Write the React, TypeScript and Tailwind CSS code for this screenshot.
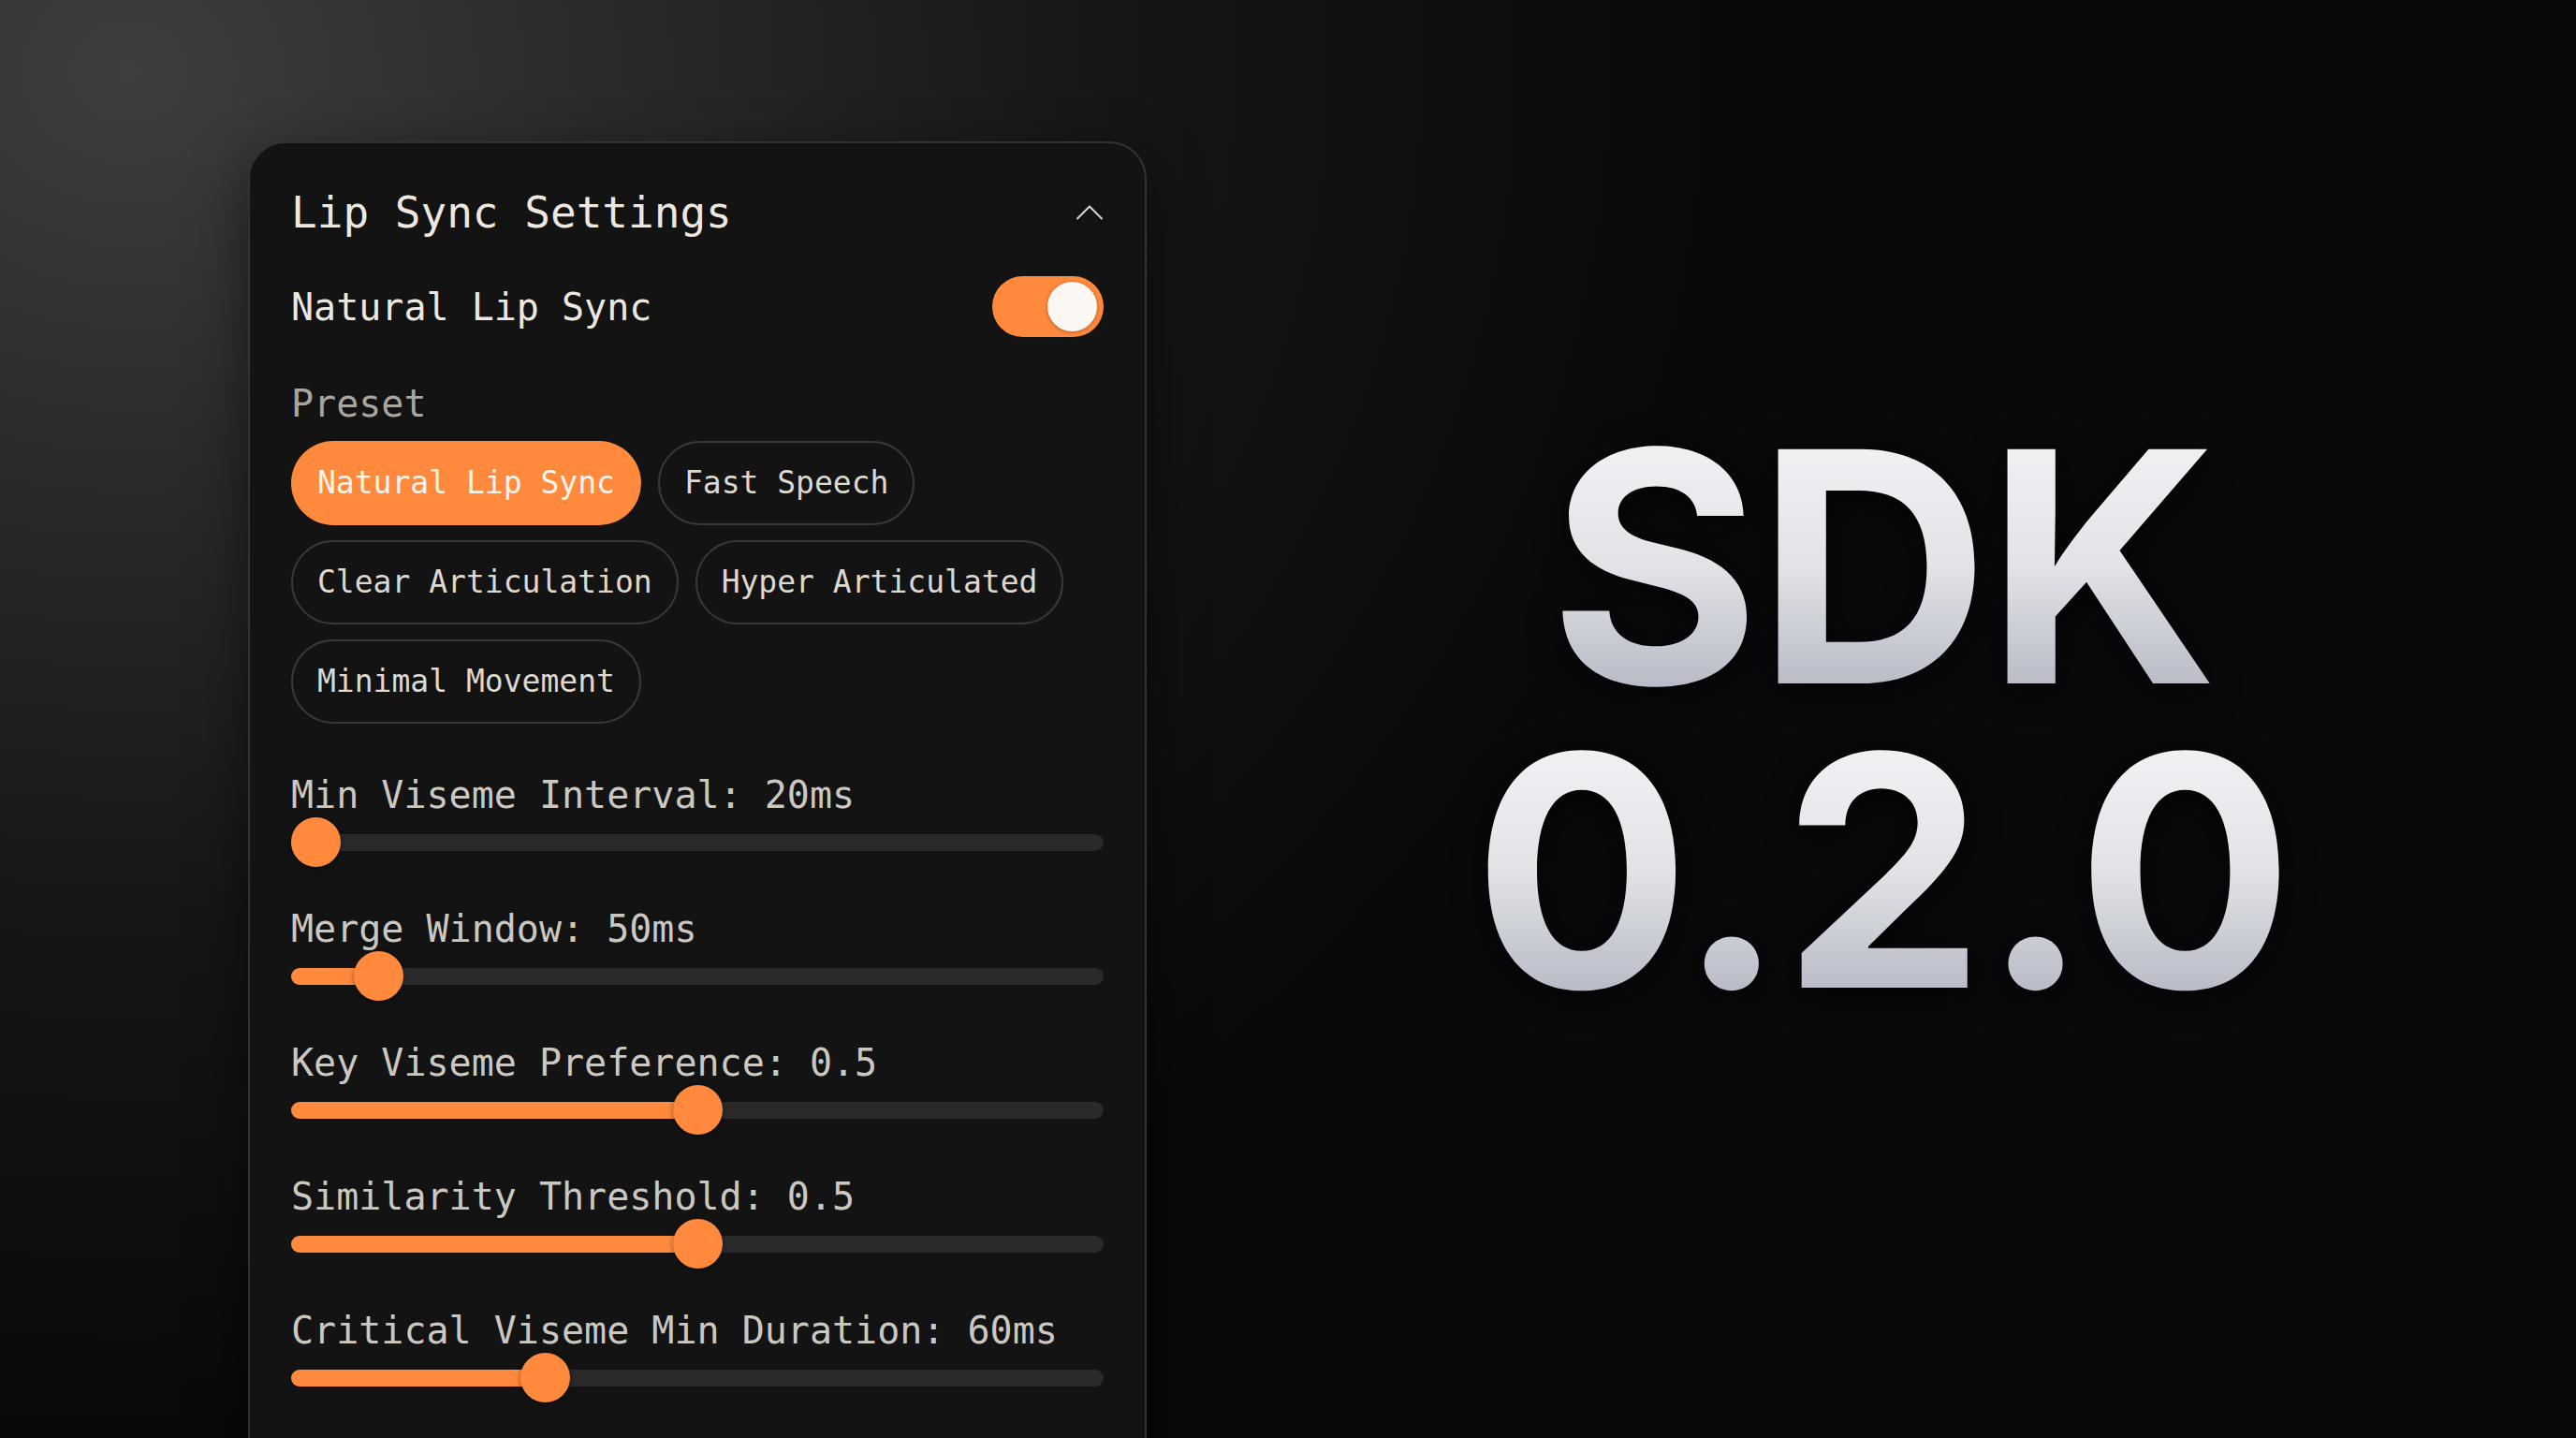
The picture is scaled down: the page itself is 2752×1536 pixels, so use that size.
import { ChevronUp } from "lucide-react";

const presets = [
  { name: "Natural Lip Sync", active: true },
  { name: "Fast Speech", active: false },
  { name: "Clear Articulation", active: false },
  { name: "Hyper Articulated", active: false },
  { name: "Minimal Movement", active: false },
];

const sliders = [
  { label: "Min Viseme Interval: 20ms", value: 0 },
  { label: "Merge Window: 50ms", value: 0.082 },
  { label: "Key Viseme Preference: 0.5", value: 0.5 },
  { label: "Similarity Threshold: 0.5", value: 0.5 },
  { label: "Critical Viseme Min Duration: 60ms", value: 0.3 },
];

const Slider = ({ label, value }: { label: string; value: number }) => (
  <div className="flex flex-col">
    <div className="h-[48px] leading-[48px] text-[40px] text-[#cbc8c1]">{label}</div>
    <div className="relative h-[53px] flex items-center">
      <div className="w-full h-[18px] rounded-full bg-[#2a2a2c]" />
      <div
        className="absolute left-0 top-1/2 -translate-y-1/2 h-[18px] rounded-full bg-[#ff8a3d]"
        style={{ width: `calc(26.5px + ${value} * (100% - 53px))` }}
      />
      <div
        className="absolute top-0 w-[53px] h-[53px] rounded-full bg-[#ff8a3d] shadow-[0_2px_6px_rgba(0,0,0,0.4)]"
        style={{ left: `calc(${value} * (100% - 53px))` }}
      />
    </div>
  </div>
);

export default function App() {
  return (
    <div className="w-[2752px] h-[1536px] overflow-hidden flex bg-[radial-gradient(ellipse_62%_95%_at_5%_5%,#3e3e41_0%,#2a2a2d_30%,#161618_62%,#08090b_100%)] font-['DejaVu_Sans_Mono',monospace]">
      {/* settings panel */}
      <div className="ml-[265px] mt-[151px] w-[960px] h-[1500px] shrink-0 rounded-[40px] border-2 border-[#323234] bg-[#131314] px-[44px] pt-[46px] shadow-[0_20px_60px_rgba(0,0,0,0.55)]">
        <div className="flex items-center justify-between h-[56px]">
          <span className="text-[46px] leading-[56px] text-[#ece8e0]">Lip Sync Settings</span>
          <ChevronUp size={52} strokeWidth={0.9} className="text-[#dcd8d0] -mr-[11px]" />
        </div>

        <div className="mt-[40px] flex items-center justify-between h-[65px]">
          <span className="text-[40px] text-[#ece8e0]">Natural Lip Sync</span>
          <div className="w-[119px] h-[65px] rounded-full bg-[#ff8a3d] flex items-center justify-end pr-[7px]">
            <div className="w-[53px] h-[53px] rounded-full bg-[#fbf8f3] shadow-[0_1px_4px_rgba(0,0,0,0.3)]" />
          </div>
        </div>

        <div className="mt-[47px] h-[48px] leading-[48px] text-[40px] text-[#a9a69f]">Preset</div>

        <div className="mt-[16px] flex flex-wrap gap-x-[18px] gap-y-[16px] w-[860px]">
          {presets.map((p) =>
            p.active ? (
              <div
                key={p.name}
                className="h-[90px] px-[28px] rounded-full bg-[#ff8a3d] flex items-center text-[33px] text-[#fff4ea]"
              >
                {p.name}
              </div>
            ) : (
              <div
                key={p.name}
                className="h-[90px] px-[26px] rounded-full border-2 border-[#38383a] flex items-center text-[33px] text-[#ddd9d1]"
              >
                {p.name}
              </div>
            )
          )}
        </div>

        <div className="mt-[52px] flex flex-col gap-[42px]">
          {sliders.map((s) => (
            <Slider key={s.label} label={s.label} value={s.value} />
          ))}
        </div>
      </div>

      {/* version title */}
      <div className="flex-1 flex items-center justify-center pl-[44px]">
        <div className="flex flex-col items-center font-['Inter',sans-serif] font-bold text-[344px] leading-[325px] tracking-[-0.01em] drop-shadow-[0_6px_18px_rgba(0,0,0,0.7)]">
          <span className="bg-linear-to-b from-[#f3f4f6] via-[#e1e3e7] to-[#aeb1bd] bg-clip-text text-transparent">SDK</span>
          <span className="bg-linear-to-b from-[#f3f4f6] via-[#e1e3e7] to-[#aeb1bd] bg-clip-text text-transparent">0.2.0</span>
        </div>
      </div>
    </div>
  );
}
